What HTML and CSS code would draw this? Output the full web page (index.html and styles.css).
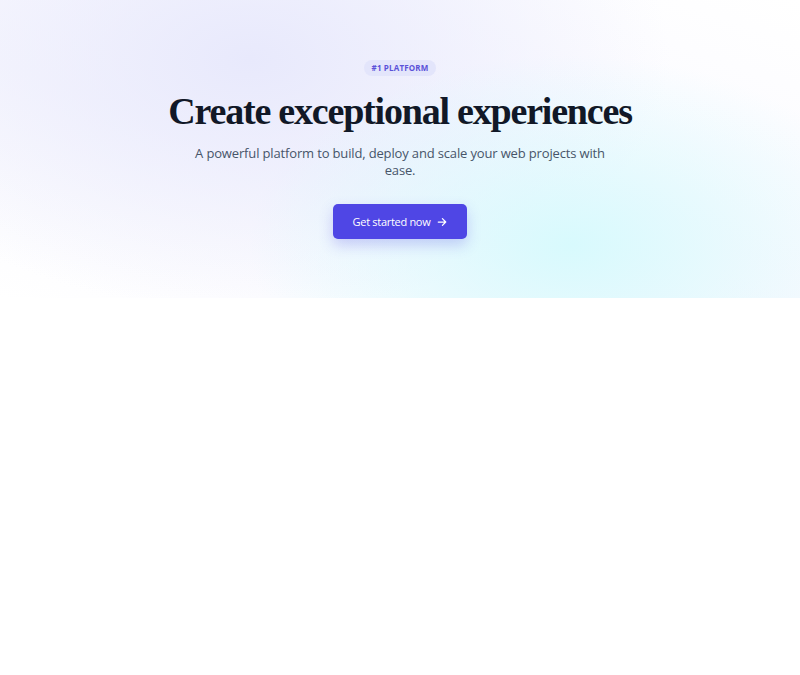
FILE: index.html
```html
<!DOCTYPE html>
<html lang="en">
<head>
  <meta charset="UTF-8">
  <meta name="viewport" content="width=device-width, initial-scale=1.0">
  <title>Create exceptional experiences</title>
  <link rel="stylesheet" href="styles.css">
</head>
<body>
  <section class="hero">
    <span class="badge">#1 Platform</span>
    <h1 class="hero-title">Create exceptional experiences</h1>
    <p class="hero-text">A powerful platform to build, deploy and scale your web projects with ease.</p>
    <a class="button" href="#">
      Get started now
      <svg width="10" height="10" viewBox="0 0 12 12" fill="none" stroke="currentColor" stroke-width="1.5" stroke-linecap="round" stroke-linejoin="round"><path d="M1.5 6h9M6.5 2l4 4-4 4"/></svg>
    </a>
  </section>
</body>
</html>
```

FILE: styles.css
```css
body { margin: 0; background: #fff; font-family: "Open Sans", Arial, sans-serif; }
.hero {
  height: 298px; box-sizing: border-box; padding-top: 60px;
  display: flex; flex-direction: column; align-items: center; text-align: center;
  background:
    radial-gradient(ellipse 320px 190px at 570px 245px, rgba(214, 250, 253, 0.95), rgba(214, 250, 253, 0) 100%),
    radial-gradient(ellipse 420px 250px at 250px 60px, rgba(232, 233, 252, 1), rgba(232, 233, 252, 0) 100%),
    linear-gradient(200deg, #fff 0%, #fbfbff 30%, #f8f8fe 60%, #fff 100%);
}
.badge {
  display: inline-block; padding: 2px 8px; border-radius: 9px; background: #e3e5fb;
  color: #5b52d9; font-size: 8px; font-weight: 700; letter-spacing: 0.02em; text-transform: uppercase; line-height: 12px;
}
.hero-title {
  margin: 13px 0 0; font-family: "Liberation Serif", "Times New Roman", serif; font-weight: 700;
  font-size: 38px; line-height: 44px; letter-spacing: -1.2px; color: #111827;
}
.hero-text {
  margin: 12px 0 0; max-width: 412px; font-size: 13px; line-height: 17px; letter-spacing: -0.15px; color: #475569;
}
.button {
  margin-top: 25px; display: inline-flex; align-items: center; gap: 7px;
  height: 35px; padding: 0 20px; border-radius: 5px; background: #4f46e5; color: #fff;
  font-size: 11px; font-weight: 500; letter-spacing: -0.3px; text-decoration: none;
  box-shadow: 0 6px 14px rgba(79, 70, 229, 0.25);
}
```
